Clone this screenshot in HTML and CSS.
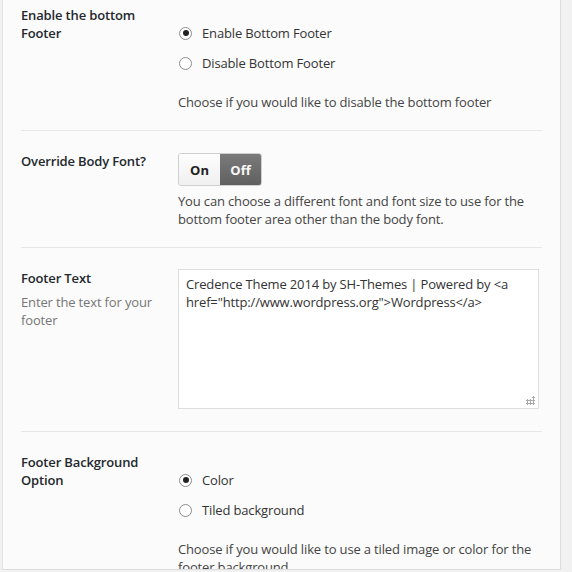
FILE: index.html
```html
<!DOCTYPE html>
<html>
    <head>
        <title>Footer Options</title>
        <meta name="viewport" content="width=device-width, initial-scale=1">
        <link rel="stylesheet" href="styles.css">
    </head>
    <body>
        <div class="panel">
            <div class="row">
                <div class="label">Enable the bottom Footer</div>
                <div class="field">
                    <div class="radios">
                        <label class="radio"><span class="dot checked"></span>Enable Bottom Footer</label>
                        <label class="radio"><span class="dot"></span>Disable Bottom Footer</label>
                    </div>
                    <p class="desc">Choose if you would like to disable the bottom footer</p>
                </div>
            </div>

            <div class="row">
                <div class="label">Override Body Font?</div>
                <div class="field">
                    <div class="switch">
                        <span class="switch-on">On</span>
                        <span class="switch-off">Off</span>
                    </div>
                    <p class="desc tight">You can choose a different font and font size to use for the bottom footer area other than the body font.</p>
                </div>
            </div>

            <div class="row">
                <div class="label">
                    Footer Text
                    <div class="hint">Enter the text for your footer</div>
                </div>
                <div class="field">
                    <div class="text-box">
                        <textarea id="footer-text" readonly>Credence Theme 2014 by SH-Themes | Powered by <a href="http://www.wordpress.org">Wordpress</a></textarea>
                    </div>
                </div>
            </div>

            <div class="row">
                <div class="label">Footer Background Option</div>
                <div class="field">
                    <div class="radios">
                        <label class="radio"><span class="dot checked"></span>Color</label>
                        <label class="radio"><span class="dot"></span>Tiled background</label>
                    </div>
                    <p class="desc">Choose if you would like to use a tiled image or color for the footer background.</p>
                </div>
            </div>
        </div>
    </body>
</html>
```

FILE: styles.css
```css
body {
    margin: 0;
    background-color: #f1f1f1;
    font-family: "Open Sans", "Noto Sans", sans-serif;
    font-size: 13px;
    line-height: 18px;
    letter-spacing: -0.15px;
    color: #444;
}

.panel {
    margin-left: 2px;
    width: 559px;
    height: 570px;
    overflow: hidden;
    box-sizing: border-box;
    background-color: #fbfbfb;
    border-left: 1px solid #e2e2e2;
    border-right: 1px solid #dcdcdc;
    border-bottom: 1px solid #dcdcdc;
    padding: 0 18px 0 18px;
}

.row {
    display: grid;
    grid-template-columns: 157px 365px;
    padding: 21px 0 19px;
    border-bottom: 1px solid #e6e6e6;
}

.row:first-child {
    padding-top: 6px;
}

.label {
    font-weight: 600;
    color: #23282d;
    padding-right: 20px;
}

.hint {
    font-weight: normal;
    color: #777;
    margin-top: 6px;
}

.radios {
    padding-top: 12px;
}

.radio {
    display: flex;
    align-items: center;
    height: 30px;
    color: #333;
}

.dot {
    width: 13px;
    height: 13px;
    box-sizing: border-box;
    border: 1px solid #8c8c8c;
    border-radius: 50%;
    background-color: #fff;
    margin: 0 10px 0 1px;
    display: flex;
    align-items: center;
    justify-content: center;
}

.dot.checked::after {
    content: "";
    width: 6px;
    height: 6px;
    border-radius: 50%;
    background-color: #222;
}

.desc {
    margin: 15px 0 0;
    color: #444;
}

.desc.tight {
    margin-top: 6px;
}

.switch {
    display: inline-flex;
    height: 33px;
    margin-top: 1px;
    border-radius: 3px;
    overflow: hidden;
    border: 1px solid #cfcfcf;
    box-sizing: border-box;
    font-weight: bold;
    letter-spacing: 0;
}

.switch-on, .switch-off {
    width: 41px;
    display: flex;
    align-items: center;
    justify-content: center;
}

.switch-on {
    color: #222;
    background: linear-gradient(#fdfdfd, #f0f0f0);
}

.switch-off {
    color: #f8f8f8;
    background: linear-gradient(#7a7a7a, #606060);
}

.text-box {
    position: relative;
    width: 361px;
    height: 140px;
    margin-bottom: 3px;
}

.text-box textarea {
    width: 100%;
    height: 100%;
    box-sizing: border-box;
    resize: none;
    border: 1px solid #ddd;
    background-color: #fff;
    padding: 5px 7px;
    font-family: inherit;
    font-size: 13px;
    line-height: 18px;
    letter-spacing: inherit;
    color: #333;
    outline: none;
}

/* resize grip dots */
.text-box::after {
    content: "";
    position: absolute;
    right: 4px;
    bottom: 4px;
    width: 9px;
    height: 9px;
    background:
        radial-gradient(circle, #aaa 1px, transparent 1.2px) 6px 0 / 3px 3px no-repeat,
        radial-gradient(circle, #aaa 1px, transparent 1.2px) 3px 3px / 6px 3px repeat-x,
        radial-gradient(circle, #aaa 1px, transparent 1.2px) 0 6px / 9px 3px repeat-x;
    background-size: 3px 3px;
}
```
